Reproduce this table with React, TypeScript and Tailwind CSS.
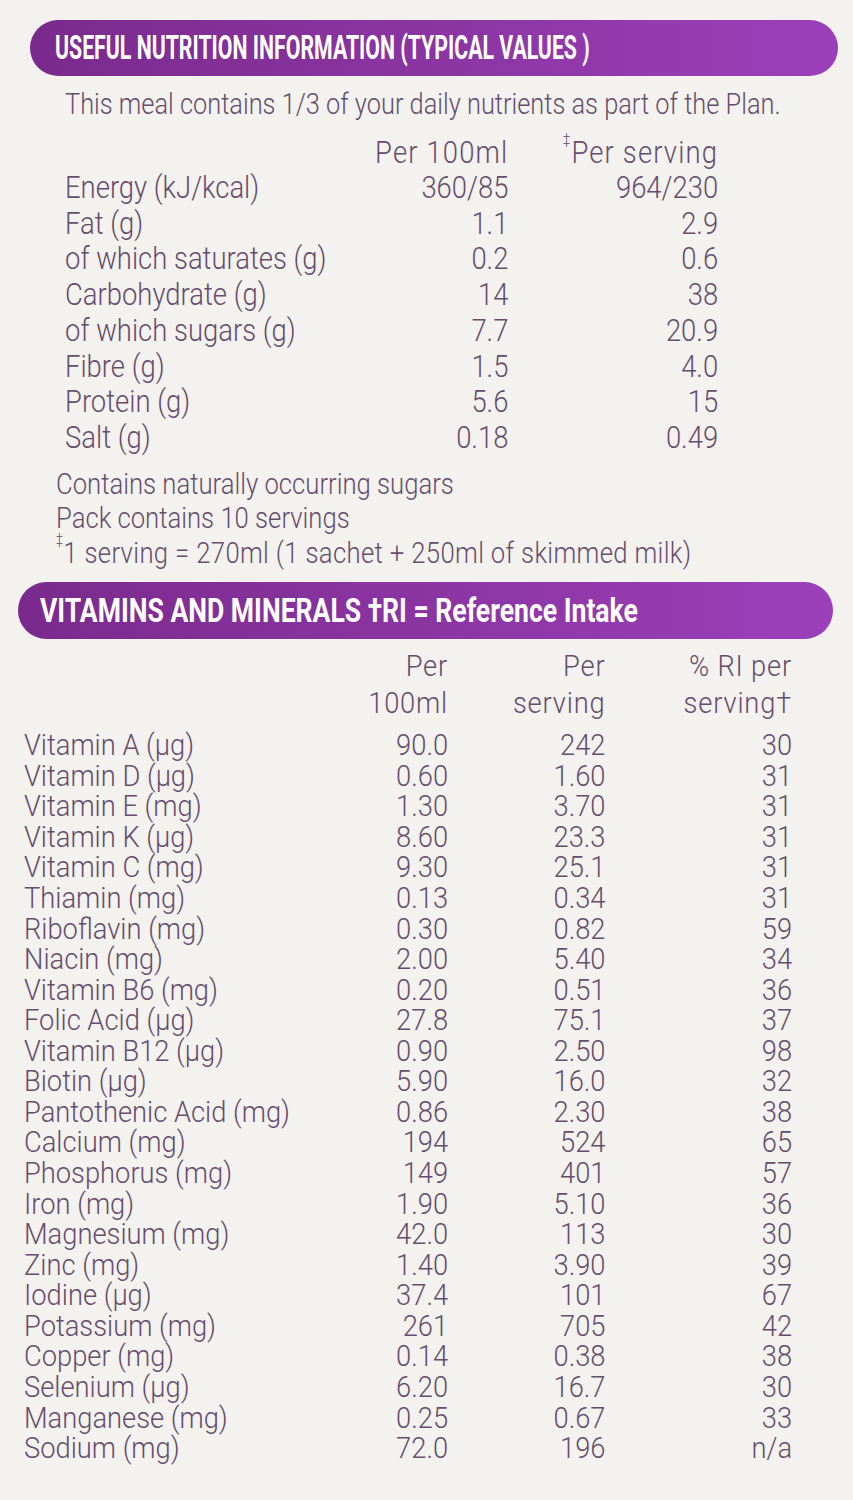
const nutrition = [
  ['Energy (kJ/kcal)', '360/85', '964/230'],
  ['Fat (g)', '1.1', '2.9'],
  ['of which saturates (g)', '0.2', '0.6'],
  ['Carbohydrate (g)', '14', '38'],
  ['of which sugars (g)', '7.7', '20.9'],
  ['Fibre (g)', '1.5', '4.0'],
  ['Protein (g)', '5.6', '15'],
  ['Salt (g)', '0.18', '0.49'],
]

const vitamins = [
  ['Vitamin A (µg)', '90.0', '242', '30'],
  ['Vitamin D (µg)', '0.60', '1.60', '31'],
  ['Vitamin E (mg)', '1.30', '3.70', '31'],
  ['Vitamin K (µg)', '8.60', '23.3', '31'],
  ['Vitamin C (mg)', '9.30', '25.1', '31'],
  ['Thiamin (mg)', '0.13', '0.34', '31'],
  ['Riboflavin (mg)', '0.30', '0.82', '59'],
  ['Niacin (mg)', '2.00', '5.40', '34'],
  ['Vitamin B6 (mg)', '0.20', '0.51', '36'],
  ['Folic Acid (µg)', '27.8', '75.1', '37'],
  ['Vitamin B12 (µg)', '0.90', '2.50', '98'],
  ['Biotin (µg)', '5.90', '16.0', '32'],
  ['Pantothenic Acid (mg)', '0.86', '2.30', '38'],
  ['Calcium (mg)', '194', '524', '65'],
  ['Phosphorus (mg)', '149', '401', '57'],
  ['Iron (mg)', '1.90', '5.10', '36'],
  ['Magnesium (mg)', '42.0', '113', '30'],
  ['Zinc (mg)', '1.40', '3.90', '39'],
  ['Iodine (µg)', '37.4', '101', '67'],
  ['Potassium (mg)', '261', '705', '42'],
  ['Copper (mg)', '0.14', '0.38', '38'],
  ['Selenium (µg)', '6.20', '16.7', '30'],
  ['Manganese (mg)', '0.25', '0.67', '33'],
  ['Sodium (mg)', '72.0', '196', 'n/a'],
]

// no condensed face installed, so squeeze Roboto horizontally instead
const font = "font-['Roboto','Liberation_Sans',sans-serif]"

function Band({ children, className, squeeze }: { children: React.ReactNode; className: string; squeeze: string }) {
  return (
    <div
      className={`flex items-center rounded-full bg-gradient-to-r from-[#7a2a8c] to-[#9c40ba] text-white font-bold text-[33px] ${className}`}
    >
      <span className={`inline-block origin-left whitespace-nowrap ${squeeze}`}>{children}</span>
    </div>
  )
}

export default function App() {
  return (
    <div className={`w-[853px] h-[1500px] bg-[#f4f2ef] text-[#664d6d] font-light overflow-hidden ${font}`}>
      <Band className="mt-[20px] ml-[30px] w-[808px] h-[56px] pl-[25px]" squeeze="scale-x-[0.645]">
        USEFUL NUTRITION INFORMATION (TYPICAL VALUES )
      </Band>

      <p className="mt-[10px] ml-[65px] text-[29.5px] leading-[36px] whitespace-nowrap origin-left scale-x-[0.86]">
        This meal contains 1/3 of your daily nutrients as part of the Plan.
      </p>

      <div className="mt-[14px] ml-[65px] w-max grid grid-cols-[339px_162px_237px] text-[31px] origin-left scale-x-[0.885]">
        <div className="h-[34px]" />
        <div className="h-[34px] leading-[34px] text-right whitespace-nowrap tracking-[1.3px]">Per 100ml</div>
        <div className="h-[34px] leading-[34px] text-right whitespace-nowrap tracking-[1.3px]">
          <sup className="text-[15px] align-[12px]">‡</sup>Per serving
        </div>
        {nutrition.map(([label, a, b]) => (
          <div key={label} className="contents">
            <div className="leading-[35.7px] whitespace-nowrap">{label}</div>
            <div className="leading-[35.7px] text-right">{a}</div>
            <div className="leading-[35.7px] text-right">{b}</div>
          </div>
        ))}
      </div>

      <div className="mt-[11px] ml-[56px] text-[29.5px] leading-[34.5px] whitespace-nowrap origin-left scale-x-[0.87]">
        <p>Contains naturally occurring sugars</p>
        <p>Pack contains 10 servings</p>
        <p className="tracking-[0.4px]">
          <sup className="text-[14px] align-[12px]">‡</sup>1 serving = 270ml (1 sachet + 250ml of skimmed milk)
        </p>
      </div>

      <Band className="mt-[12px] ml-[18px] w-[815px] h-[57px] pl-[22px]" squeeze="scale-x-[0.805]">
        VITAMINS AND MINERALS †RI = Reference Intake
      </Band>

      <div className="mt-[8px] ml-[24px] w-max grid grid-cols-[330px_136px_173px_205px] text-[30px] tracking-[0.9px] origin-left scale-x-[0.91]">
        <div />
        <div className="leading-[37px] text-right">Per<br />100ml</div>
        <div className="leading-[37px] text-right">Per<br />serving</div>
        <div className="leading-[37px] text-right whitespace-nowrap">% RI per<br />serving†</div>
      </div>

      <div className="mt-[9px] ml-[24px] w-max grid grid-cols-[330px_136px_173px_205px] text-[30px] origin-left scale-x-[0.91]">
        {vitamins.map(([label, a, b, c]) => (
          <div key={label} className="contents">
            <div className="leading-[30.57px] whitespace-nowrap">{label}</div>
            <div className="leading-[30.57px] text-right">{a}</div>
            <div className="leading-[30.57px] text-right">{b}</div>
            <div className="leading-[30.57px] text-right">{c}</div>
          </div>
        ))}
      </div>
    </div>
  )
}
